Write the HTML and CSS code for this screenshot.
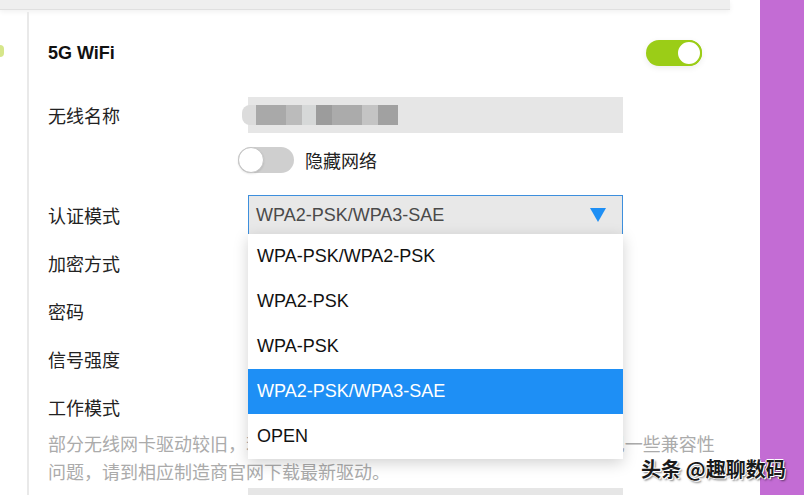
FILE: index.html
```html
<!DOCTYPE html>
<html lang="zh-CN">
<head>
  <meta charset="UTF-8" />
  <meta name="viewport" content="width=device-width, initial-scale=1.0" />
  <title>无线设置</title>
  <link rel="stylesheet" href="styles.css">
</head>
<body>
  <div class="page">
    <main class="main">
      <div class="top-card"></div>

      <div class="body">
        <div class="gutter">
          <span class="side-dot"></span>
        </div>

        <section class="panel">
          <div class="panel-head">
            <h2>5G WiFi</h2>
            <span class="switch on"><span class="knob"></span></span>
          </div>

          <div class="row row-name">
            <label>无线名称</label>
            <div class="field blurred">
              <span class="px px1"></span><span class="px px2"></span><span class="px px3"></span>
              <span class="px px4"></span><span class="px px5"></span><span class="px px6"></span>
              <span class="px px7"></span><span class="px px8"></span>
            </div>
          </div>

          <div class="row row-hide">
            <label></label>
            <div class="hide-opt">
              <span class="switch off"><span class="knob"></span></span>
              <span>隐藏网络</span>
            </div>
          </div>

          <div class="row row-auth">
            <label>认证模式</label>
            <div class="select-wrap">
              <div class="select">
                <span>WPA2-PSK/WPA3-SAE</span>
                <span class="arrow"></span>
              </div>
              <ul class="options">
                <li>WPA-PSK/WPA2-PSK</li>
                <li>WPA2-PSK</li>
                <li>WPA-PSK</li>
                <li class="selected">WPA2-PSK/WPA3-SAE</li>
                <li>OPEN</li>
              </ul>
            </div>
          </div>

          <div class="row"><label>加密方式</label></div>
          <div class="row"><label>密码</label></div>
          <div class="row"><label>信号强度</label></div>
          <div class="row"><label>工作模式</label></div>

          <p class="note">部分无线网卡驱动较旧，若使用WPA3 加密可能导致设备连接失败或出现一些兼容性<br>问题，请到相应制造商官网下载最新驱动。</p>

          <div class="row row-last">
            <label></label>
            <div class="field"></div>
          </div>
        </section>
      </div>
    </main>

    <aside class="sidebar"></aside>
  </div>

  <div class="watermark">头条 @趣聊数码</div>
</body>
</html>
```

FILE: styles.css
```css
body {
  margin: 0;
  font-family: "Liberation Sans", "Noto Sans CJK SC", sans-serif;
  background: #fff;
  color: #222;
  overflow: hidden;
}
.page {
  display: flex;
  height: 495px;
  overflow: hidden;
}
.main {
  width: 760px;
}
.sidebar {
  width: 44px;
  background: #c36cd4;
}

.top-card {
  width: 730px;
  height: 9px;
  background: #efefef;
  border-bottom: 1px solid #e0e0e0;
  box-shadow: 0 2px 5px rgba(0,0,0,0.06);
}

.body {
  display: flex;
  margin-top: 2px;
}
.gutter {
  width: 27px;
  padding-top: 33px;
}
.side-dot {
  display: block;
  width: 4px;
  height: 12px;
  border-radius: 0 6px 6px 0;
  background: #d6e68a;
}

.panel {
  border-left: 2px solid #e9e9e9;
  padding: 28px 0 0 19px;
  width: 654px;
}
.panel-head {
  display: flex;
  justify-content: space-between;
  align-items: center;
  height: 26px;
}
.panel-head h2 {
  margin: 0;
  font-size: 18px;
  font-weight: bold;
  color: #111;
}

/* switches */
.switch {
  display: inline-block;
  position: relative;
  width: 56px;
  height: 26px;
  border-radius: 13px;
  box-sizing: border-box;
}
.switch .knob {
  position: absolute;
  top: 0;
  width: 26px;
  height: 26px;
  border-radius: 50%;
  background: #fff;
  box-sizing: border-box;
}
.switch.on {
  background: #9bcd17;
  box-shadow: 0 2px 6px rgba(0,0,0,0.08);
}
.switch.on .knob {
  right: 0;
  border: 2px solid #9bcd17;
}
.switch.off {
  background: #cfcfcf;
}
.switch.off .knob {
  left: 0;
  border: 1px solid #c4c4c4;
  box-shadow: 0 1px 2px rgba(0,0,0,0.1);
}

/* form rows */
.row {
  display: flex;
  align-items: center;
  height: 48px;
  font-size: 18px;
}
.row label {
  width: 200px;
  flex-shrink: 0;
  color: #222;
}
.row-name {
  height: 36px;
  margin-top: 31px;
}
.row-hide {
  height: 26px;
  margin-top: 14px;
}
.row-auth {
  height: 39px;
  margin-top: 22px;
  margin-bottom: 5px;
}
.row-last {
  height: 36px;
  margin-top: 1px;
  align-items: flex-start;
}

.field {
  width: 375px;
  height: 36px;
  background: #e6e6e6;
}
.blurred {
  display: flex;
  align-items: center;
}
.px {
  display: block;
  height: 20px;
}
.px1 { width: 14px; background: #dcdcdc; border-radius: 8px 0 0 8px; margin-left: -6px; }
.px2 { width: 30px; background: #a9a9a9; }
.px3 { width: 16px; background: #bbbbbb; }
.px4 { width: 14px; background: #d6d8d8; }
.px5 { width: 16px; background: #9c9c9c; }
.px6 { width: 30px; background: #ababab; }
.px7 { width: 16px; background: #c4c4c4; }
.px8 { width: 20px; background: #a1a1a1; }

.hide-opt {
  display: flex;
  align-items: center;
  gap: 11px;
  margin-left: -10px;
}

/* select + open list */
.select-wrap {
  position: relative;
  width: 375px;
}
.select {
  display: flex;
  justify-content: space-between;
  align-items: center;
  height: 39px;
  box-sizing: border-box;
  border: 1px solid #3d8fdd;
  border-bottom: none;
  background: #e8e8e8;
  padding: 0 16px 0 7px;
  color: #4a4a4a;
}
.arrow {
  width: 0;
  height: 0;
  border-left: 8px solid transparent;
  border-right: 8px solid transparent;
  border-top: 14px solid #1e8ff5;
}
.options {
  position: absolute;
  top: 39px;
  left: 0;
  right: 0;
  margin: 0;
  padding: 0;
  list-style: none;
  background: #fff;
  box-shadow: 0 4px 14px rgba(0,0,0,0.18);
  z-index: 2;
}
.options li {
  height: 45px;
  line-height: 45px;
  padding-left: 9px;
  color: #111;
}
.options li.selected {
  background: #1e8ff5;
  color: #fff;
}

.note {
  margin: 0;
  font-size: 18px;
  line-height: 28px;
  color: #ababab;
  white-space: nowrap;
}

.watermark {
  position: absolute;
  left: 641px;
  top: 454px;
  font-size: 20px;
  font-weight: bold;
  color: #1a1a1a;
  font-family: "Noto Sans CJK SC", sans-serif;
  text-shadow: 1px 1px 0 #fff, -1px 0 0 #fff, 0 -1px 0 #fff, 2px 2px 2px rgba(0,0,0,0.5);
}
```
